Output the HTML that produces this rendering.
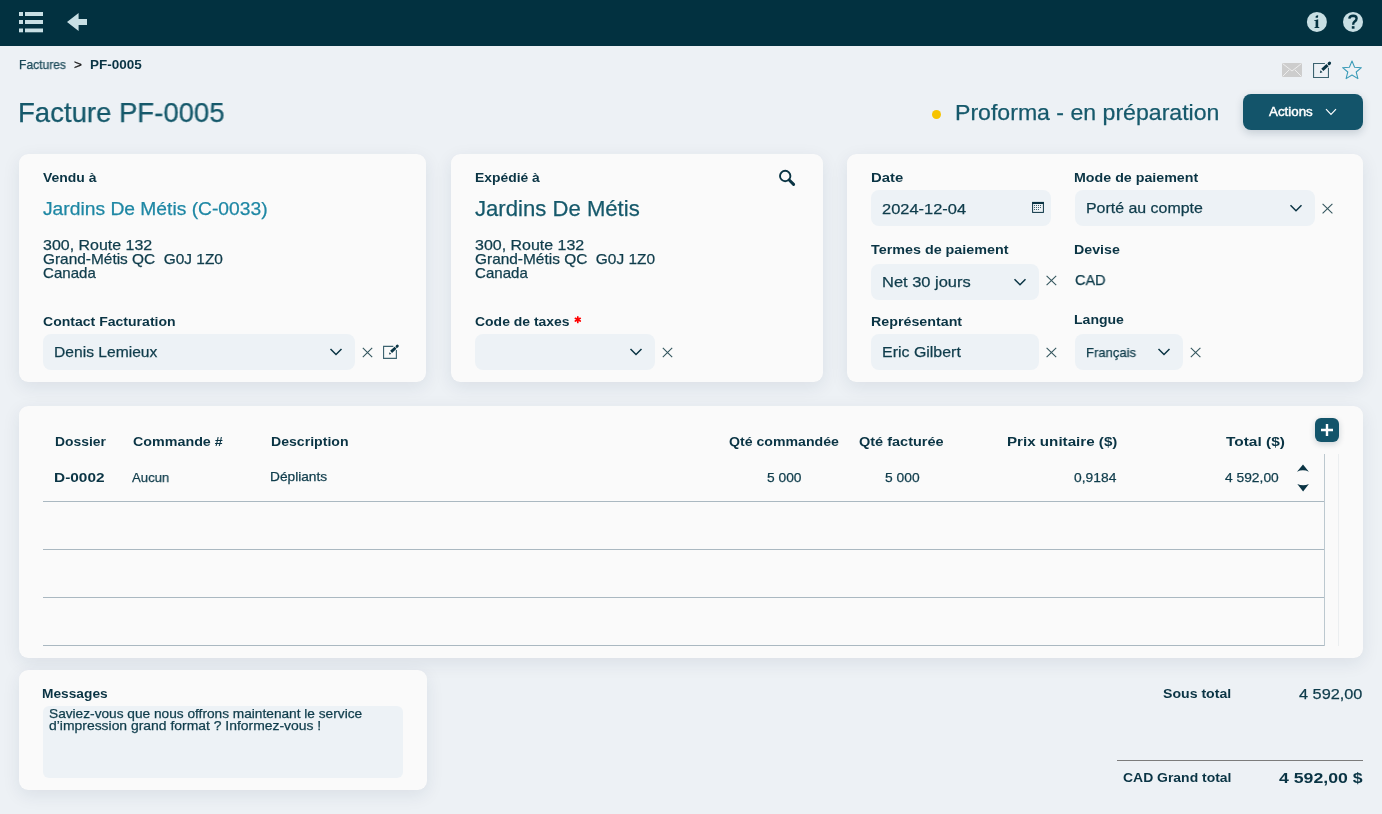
<!DOCTYPE html>
<html><head><meta charset="utf-8">
<style>
html,body{margin:0;padding:0;}
body{width:1382px;height:814px;overflow:hidden;background:#edf1f5;position:relative;font-family:"Liberation Sans",sans-serif;}
.t{position:absolute;white-space:pre;line-height:1;transform-origin:0 0;will-change:transform;}
.abs{position:absolute;}
.hdr{left:0;top:0;width:1382px;height:46px;background:#023140;}
.card{position:absolute;background:#fafafa;border-radius:9px;box-shadow:0 5px 18px rgba(20,50,80,0.085),0 0 1px rgba(20,50,80,0.03);}
.inp{position:absolute;background:#edf2f6;border-radius:8px;height:36px;}
.line{position:absolute;height:1px;background:#aab8c1;}
svg{position:absolute;overflow:visible;}
</style></head>
<body>
<div class="abs hdr"></div>
<!-- menu icon -->
<svg style="left:0;top:0" width="100" height="46">
 <g fill="#c8dfe4">
  <rect x="19" y="12" width="4" height="4"/><rect x="25" y="12" width="18" height="4"/>
  <rect x="19" y="20" width="4" height="4"/><rect x="25" y="20" width="18" height="4"/>
  <rect x="19" y="28.5" width="4" height="3.8"/><rect x="25" y="28.5" width="18" height="3.8"/>
  <path d="M67 22 L78.6 13 L78.6 19 L87 19 L87 25 L78.6 25 L78.6 31 Z"/>
 </g>
</svg>
<!-- info / help -->
<svg style="left:0;top:0" width="1382" height="46">
 <circle cx="1316.9" cy="21.9" r="10" fill="#c8dfe4"/>
 <circle cx="1353" cy="21.9" r="10" fill="#c8dfe4"/>
 <g fill="#023140">
  <path d="M1315.3 17.2 Q1315.6 15.2 1318.2 15.3 L1318 17.4 Q1317.2 18.4 1315.3 17.2 Z"/>
  <path d="M1314.1 20.4 L1318.2 19.3 L1318.2 27.1 L1319.3 27.2 L1319.3 28 L1314.5 28 L1314.5 27.2 L1315.6 27.1 L1315.6 21 L1314.1 21 Z"/>
  <rect x="1351.8" y="26.2" width="2.7" height="2.5"/>
 </g>
 <path d="M1349.3 18.6 Q1349.6 15.9 1353.2 15.8 Q1356.6 15.9 1356.6 18.6 Q1356.6 20.4 1354.6 21.6 Q1353.2 22.5 1353.2 24.8" stroke="#023140" stroke-width="2.4" fill="none"/>
</svg>
<!-- envelope / edit / star -->
<svg style="left:0;top:0" width="1382" height="90">
 <g>
  <rect x="1282" y="63" width="20" height="14" fill="#cdcdcd"/>
  <path d="M1282.5 63.5 L1292 71 L1301.5 63.5 M1282.5 76.5 L1289 70 M1301.5 76.5 L1295 70" stroke="#eeeeee" stroke-width="1" fill="none"/>
 </g>
 <g transform="translate(1313,62)">
  <path d="M11.9 1.55 L0.55 1.55 L0.55 15.45 L15.45 15.45 L15.45 5.8" stroke="#3d6370" stroke-width="1.1" fill="none"/>
  <path d="M9.3 7.9 L14.5 3.1" stroke="#0a3444" stroke-width="3.1"/>
  <path d="M16.1 1.6 L16.6 1.1" stroke="#0a3444" stroke-width="3" stroke-linecap="round"/>
  <path d="M6.9 10.9 L7.5 8.3 L9.5 10.3 Z" fill="#0a3444"/>
 </g>
 <path d="M1352 61 L1354.6 67.3 L1361.4 67.7 L1356.2 72 L1357.9 78.6 L1352 75 L1346.1 78.6 L1347.8 72 L1342.6 67.7 L1349.4 67.3 Z" stroke="#3a9bb8" stroke-width="1.05" fill="none" stroke-linejoin="round"/>
</svg>
<!-- status dot and actions -->
<div class="abs" style="left:932px;top:109.5px;width:9px;height:9px;border-radius:50%;background:#f6c300;"></div>
<div class="abs" style="left:1243px;top:94px;width:120px;height:36px;border-radius:8px;background:#13546a;box-shadow:0 3px 8px rgba(10,40,60,0.18);"></div>
<svg style="left:0;top:0" width="1382" height="140">
 <path d="M1326 109.2 L1331 114.3 L1336 109.2" stroke="#fff" stroke-width="1.2" fill="none"/>
</svg>

<!-- cards -->
<div class="card" style="left:19px;top:154px;width:407px;height:228px;"></div>
<div class="card" style="left:451px;top:154px;width:372px;height:228px;"></div>
<div class="card" style="left:847px;top:154px;width:516px;height:228px;"></div>
<div class="card" style="left:19px;top:406px;width:1344px;height:252px;"></div>
<div class="card" style="left:19px;top:670px;width:408px;height:120px;"></div>

<!-- inputs -->
<div class="inp" style="left:43px;top:334px;width:312px;"></div>
<div class="inp" style="left:475px;top:334px;width:180px;"></div>
<div class="inp" style="left:871px;top:190px;width:180px;"></div>
<div class="inp" style="left:1075px;top:190px;width:240px;"></div>
<div class="inp" style="left:871px;top:264px;width:168px;"></div>
<div class="inp" style="left:871px;top:334px;width:168px;"></div>
<div class="inp" style="left:1075px;top:334px;width:108px;"></div>
<div class="inp" style="left:43px;top:706px;width:360px;height:72px;border-radius:6px;"></div>

<!-- table lines -->
<div class="line" style="left:43px;top:501px;width:1281px;"></div>
<div class="line" style="left:43px;top:549px;width:1281px;"></div>
<div class="line" style="left:43px;top:597px;width:1281px;"></div>
<div class="line" style="left:43px;top:645px;width:1281px;"></div>
<div class="abs" style="left:1324px;top:454px;width:1px;height:192px;background:#bcc8cf;"></div>
<div class="abs" style="left:1338px;top:454px;width:1px;height:192px;background:#ebeef0;"></div>
<div class="abs" style="left:1315px;top:418px;width:24px;height:24px;border-radius:6px;background:#13546a;box-shadow:0 2px 6px rgba(10,40,60,0.2);"></div>
<div class="abs" style="left:1117px;top:760px;width:246px;height:1px;background:#7c7c7c;"></div>

<!-- icons overlay -->
<svg style="left:0;top:0" width="1382" height="814">
 <g stroke="#0a3444" stroke-width="1.5" fill="none" stroke-linecap="butt">
  <path d="M330.5 349 L336 354.5 L341.5 349"/>
  <path d="M630.5 349 L636 354.5 L641.5 349"/>
  <path d="M1290.5 205.3 L1296 210.8 L1301.5 205.3"/>
  <path d="M1014.5 279.2 L1020 284.7 L1025.5 279.2"/>
  <path d="M1158.5 349 L1164 354.5 L1169.5 349"/>
 </g>
 <g stroke="#35575f" stroke-width="1.1" fill="none">
  <path d="M362.8 347.8 L372.2 357.2 M372.2 347.8 L362.8 357.2"/>
  <path d="M662.8 347.8 L672.2 357.2 M672.2 347.8 L662.8 357.2"/>
  <path d="M1322.6 203.8 L1332.4 213.4 M1332.4 203.8 L1322.6 213.4"/>
  <path d="M1046.6 275.8 L1056.2 285.2 M1056.2 275.8 L1046.6 285.2"/>
  <path d="M1046.6 347.8 L1056.2 357.2 M1056.2 347.8 L1046.6 357.2"/>
  <path d="M1190.8 347.8 L1200.4 357.2 M1200.4 347.8 L1190.8 357.2"/>
 </g>
 <!-- contact edit -->
 <g transform="translate(383.1,345.1) scale(0.86)">
  <path d="M11.9 1.55 L0.55 1.55 L0.55 15.45 L15.45 15.45 L15.45 5.8" stroke="#3d6370" stroke-width="1.3" fill="none"/>
  <path d="M9.3 7.9 L14.5 3.1" stroke="#0a3444" stroke-width="3.3"/>
  <path d="M16.1 1.6 L16.6 1.1" stroke="#0a3444" stroke-width="3.2" stroke-linecap="round"/>
  <path d="M6.9 10.9 L7.5 8.3 L9.5 10.3 Z" fill="#0a3444"/>
 </g>
 <!-- search -->
 <circle cx="785.2" cy="176" r="5.2" stroke="#0a3444" stroke-width="1.9" fill="none"/>
 <path d="M789.2 180 L793.6 184.4" stroke="#0a3444" stroke-width="3" stroke-linecap="round"/>
 <!-- calendar -->
 <rect x="1032.6" y="202.4" width="10.8" height="10" stroke="#0a3444" stroke-width="1" fill="none"/>
 <rect x="1032.2" y="202" width="11.6" height="2" fill="#0a3444"/>
 <g fill="#40606b">
  <rect x="1034" y="205" width="1" height="1"/><rect x="1036" y="205" width="1" height="1"/><rect x="1038" y="205" width="1" height="1"/><rect x="1040" y="205" width="1" height="1"/>
  <rect x="1034" y="207" width="1" height="1"/><rect x="1036" y="207" width="1" height="1"/><rect x="1038" y="207" width="1" height="1"/><rect x="1040" y="207" width="1" height="1"/>
  <rect x="1034" y="209" width="1" height="1"/><rect x="1036" y="209" width="1" height="1"/><rect x="1038" y="209" width="1" height="1"/>
 </g>
 <!-- asterisk -->
 <g stroke="#ff0000" stroke-width="1.7" stroke-linecap="round">
  <path d="M577.8 316.9 L577.8 322.5"/>
  <path d="M575.35 318.3 L580.25 321.1"/>
  <path d="M580.25 318.3 L575.35 321.1"/>
 </g>
 <!-- plus -->
 <path d="M1327 424 L1327 436 M1321 430 L1333 430" stroke="#fff" stroke-width="2.4"/>
 <!-- up/down -->
 <path d="M1297 471.8 L1303 464.4 L1308.9 471.8 Q1303 468.9 1297 471.8 Z" fill="#0a3444"/>
 <path d="M1297.3 483.9 Q1303.1 486.8 1308.9 483.9 L1303.1 491.5 Z" fill="#0a3444"/>
</svg>

<span class="t" id="t0" style="left:18.51px;top:59.00px;font-size:12.2px;-webkit-text-stroke:0.25px currentColor;color:#1c4a59;transform:scaleX(0.9896);">Factures</span>
<span class="t" id="t1" style="left:73.93px;top:59.00px;font-size:12.2px;-webkit-text-stroke:0.25px currentColor;color:#1a1a1a;transform:scaleX(1.1134);">&gt;</span>
<span class="t" id="t2" style="left:90.10px;top:59.00px;font-size:12.2px;font-weight:700;color:#0a3444;transform:scaleX(1.1076);">PF-0005</span>
<span class="t" id="t3" style="left:18.04px;top:99.00px;font-size:27.6px;-webkit-text-stroke:0.25px currentColor;color:#16596b;transform:scaleX(0.9978);">Facture PF-0005</span>
<span class="t" id="t4" style="left:955.11px;top:102.00px;font-size:22.6px;-webkit-text-stroke:0.25px currentColor;color:#16596b;transform:scaleX(1.0220);">Proforma - en préparation</span>
<span class="t" id="t5" style="left:1269.17px;top:105.00px;font-size:13.2px;color:#ffffff;transform:scaleX(1.0106);-webkit-text-stroke:0.45px #fff;">Actions</span>
<span class="t" id="t6" style="left:43.40px;top:172.00px;font-size:12.7px;font-weight:700;color:#0a3444;transform:scaleX(1.1008);">Vendu à</span>
<span class="t" id="t7" style="left:43.00px;top:200.00px;font-size:18.9px;-webkit-text-stroke:0.25px currentColor;color:#1e87a4;transform:scaleX(1.0187);">Jardins De Métis (C-0033)</span>
<span class="t" id="t8" style="left:42.89px;top:238.00px;font-size:14.6px;-webkit-text-stroke:0.25px currentColor;color:#0f3c4b;transform:scaleX(1.0942);">300, Route 132</span>
<span class="t" id="t9" style="left:42.72px;top:252.00px;font-size:14.6px;-webkit-text-stroke:0.25px currentColor;color:#0f3c4b;transform:scaleX(1.0562);">Grand-Métis QC  G0J 1Z0</span>
<span class="t" id="t10" style="left:42.73px;top:266.00px;font-size:14.6px;-webkit-text-stroke:0.25px currentColor;color:#0f3c4b;transform:scaleX(1.0321);">Canada</span>
<span class="t" id="t11" style="left:43.22px;top:316.00px;font-size:12.7px;font-weight:700;color:#0a3444;transform:scaleX(1.1068);">Contact Facturation</span>
<span class="t" id="t12" style="left:54.42px;top:344.00px;font-size:15.2px;-webkit-text-stroke:0.25px currentColor;color:#0f3c4b;transform:scaleX(1.0287);">Denis Lemieux</span>
<span class="t" id="t13" style="left:474.77px;top:172.00px;font-size:12.7px;font-weight:700;color:#0a3444;transform:scaleX(1.0936);">Expédié à</span>
<span class="t" id="t14" style="left:475.05px;top:198.00px;font-size:21.2px;-webkit-text-stroke:0.25px currentColor;color:#16596b;transform:scaleX(1.0441);">Jardins De Métis</span>
<span class="t" id="t15" style="left:474.79px;top:238.00px;font-size:14.6px;-webkit-text-stroke:0.25px currentColor;color:#0f3c4b;transform:scaleX(1.0942);">300, Route 132</span>
<span class="t" id="t16" style="left:474.62px;top:252.00px;font-size:14.6px;-webkit-text-stroke:0.25px currentColor;color:#0f3c4b;transform:scaleX(1.0568);">Grand-Métis QC  G0J 1Z0</span>
<span class="t" id="t17" style="left:474.63px;top:266.00px;font-size:14.6px;-webkit-text-stroke:0.25px currentColor;color:#0f3c4b;transform:scaleX(1.0321);">Canada</span>
<span class="t" id="t18" style="left:474.73px;top:316.00px;font-size:12.7px;font-weight:700;color:#0a3444;transform:scaleX(1.1001);">Code de taxes</span>
<span class="t" id="t19" style="left:870.61px;top:172.00px;font-size:12.7px;font-weight:700;color:#0a3444;transform:scaleX(1.1710);">Date</span>
<span class="t" id="t20" style="left:882.37px;top:201.00px;font-size:15.2px;-webkit-text-stroke:0.25px currentColor;color:#0f3c4b;transform:scaleX(1.0824);">2024-12-04</span>
<span class="t" id="t21" style="left:1074.35px;top:172.00px;font-size:12.7px;font-weight:700;color:#0a3444;transform:scaleX(1.1223);">Mode de paiement</span>
<span class="t" id="t22" style="left:1086.19px;top:200.00px;font-size:15.2px;-webkit-text-stroke:0.25px currentColor;color:#0f3c4b;transform:scaleX(1.0483);">Porté au compte</span>
<span class="t" id="t23" style="left:871.44px;top:244.00px;font-size:12.7px;font-weight:700;color:#0a3444;transform:scaleX(1.1295);">Termes de paiement</span>
<span class="t" id="t24" style="left:881.85px;top:274.00px;font-size:15.2px;-webkit-text-stroke:0.25px currentColor;color:#0f3c4b;transform:scaleX(1.0837);">Net 30 jours</span>
<span class="t" id="t25" style="left:1074.35px;top:244.00px;font-size:12.7px;font-weight:700;color:#0a3444;transform:scaleX(1.1201);">Devise</span>
<span class="t" id="t26" style="left:1074.56px;top:272.00px;font-size:15.2px;-webkit-text-stroke:0.25px currentColor;color:#0f3c4b;transform:scaleX(0.9549);">CAD</span>
<span class="t" id="t27" style="left:870.65px;top:316.00px;font-size:12.7px;font-weight:700;color:#0a3444;transform:scaleX(1.1237);">Représentant</span>
<span class="t" id="t28" style="left:882.29px;top:344.00px;font-size:15.2px;-webkit-text-stroke:0.25px currentColor;color:#0f3c4b;transform:scaleX(1.0495);">Eric Gilbert</span>
<span class="t" id="t29" style="left:1074.36px;top:314.00px;font-size:12.7px;font-weight:700;color:#0a3444;transform:scaleX(1.1063);">Langue</span>
<span class="t" id="t30" style="left:1086.43px;top:346.00px;font-size:13.5px;-webkit-text-stroke:0.25px currentColor;color:#0f3c4b;transform:scaleX(0.9667);">Français</span>
<span class="t" id="t31" style="left:54.57px;top:436.00px;font-size:12.7px;font-weight:700;color:#0a3444;transform:scaleX(1.0944);">Dossier</span>
<span class="t" id="t32" style="left:132.71px;top:436.00px;font-size:12.7px;font-weight:700;color:#0a3444;transform:scaleX(1.1261);">Commande #</span>
<span class="t" id="t33" style="left:270.56px;top:436.00px;font-size:12.7px;font-weight:700;color:#0a3444;transform:scaleX(1.1106);">Description</span>
<span class="t" id="t34" style="left:729.12px;top:436.00px;font-size:12.7px;font-weight:700;color:#0a3444;transform:scaleX(1.1129);">Qté commandée</span>
<span class="t" id="t35" style="left:858.80px;top:436.00px;font-size:12.7px;font-weight:700;color:#0a3444;transform:scaleX(1.1424);">Qté facturée</span>
<span class="t" id="t36" style="left:1006.78px;top:436.00px;font-size:12.7px;font-weight:700;color:#0a3444;transform:scaleX(1.1948);">Prix unitaire ($)</span>
<span class="t" id="t37" style="left:1225.83px;top:436.00px;font-size:12.7px;font-weight:700;color:#0a3444;transform:scaleX(1.2177);">Total ($)</span>
<span class="t" id="t38" style="left:54.47px;top:472.00px;font-size:12.7px;font-weight:700;color:#0a3444;transform:scaleX(1.2144);">D-0002</span>
<span class="t" id="t39" style="left:132.17px;top:471.00px;font-size:13.2px;-webkit-text-stroke:0.25px currentColor;color:#0f3c4b;transform:scaleX(0.9939);">Aucun</span>
<span class="t" id="t40" style="left:270.38px;top:470.00px;font-size:13.2px;-webkit-text-stroke:0.25px currentColor;color:#0f3c4b;transform:scaleX(1.0388);">Dépliants</span>
<span class="t" id="t41" style="left:767.05px;top:471.00px;font-size:13.2px;-webkit-text-stroke:0.25px currentColor;color:#0f3c4b;transform:scaleX(1.0447);">5 000</span>
<span class="t" id="t42" style="left:884.95px;top:471.00px;font-size:13.2px;-webkit-text-stroke:0.25px currentColor;color:#0f3c4b;transform:scaleX(1.0478);">5 000</span>
<span class="t" id="t43" style="left:1074.46px;top:471.00px;font-size:13.2px;-webkit-text-stroke:0.25px currentColor;color:#0f3c4b;transform:scaleX(1.0497);">0,9184</span>
<span class="t" id="t44" style="left:1224.98px;top:471.00px;font-size:13.2px;-webkit-text-stroke:0.25px currentColor;color:#0f3c4b;transform:scaleX(1.0470);">4 592,00</span>
<span class="t" id="t45" style="left:42.48px;top:688.00px;font-size:12.7px;font-weight:700;color:#0a3444;transform:scaleX(1.0829);">Messages</span>
<span class="t" id="t46" style="left:48.68px;top:707.00px;font-size:13.2px;-webkit-text-stroke:0.25px currentColor;color:#0f3c4b;transform:scaleX(1.0376);">Saviez-vous que nous offrons maintenant le service</span>
<span class="t" id="t47" style="left:48.72px;top:719.00px;font-size:13.2px;-webkit-text-stroke:0.25px currentColor;color:#0f3c4b;transform:scaleX(1.0552);">d’impression grand format ? Informez-vous !</span>
<span class="t" id="t48" style="left:1163.19px;top:687.00px;font-size:13.7px;font-weight:700;color:#0a3444;transform:scaleX(1.0307);">Sous total</span>
<span class="t" id="t49" style="left:1299.33px;top:686.00px;font-size:15.2px;-webkit-text-stroke:0.25px currentColor;color:#0f3c4b;transform:scaleX(1.0725);">4 592,00</span>
<span class="t" id="t50" style="left:1122.93px;top:771.00px;font-size:13.7px;font-weight:700;color:#0a3444;transform:scaleX(1.0187);">CAD Grand total</span>
<span class="t" id="t51" style="left:1278.73px;top:770.00px;font-size:15.2px;font-weight:700;color:#0a3444;transform:scaleX(1.1647);">4 592,00 $</span>
</body></html>
